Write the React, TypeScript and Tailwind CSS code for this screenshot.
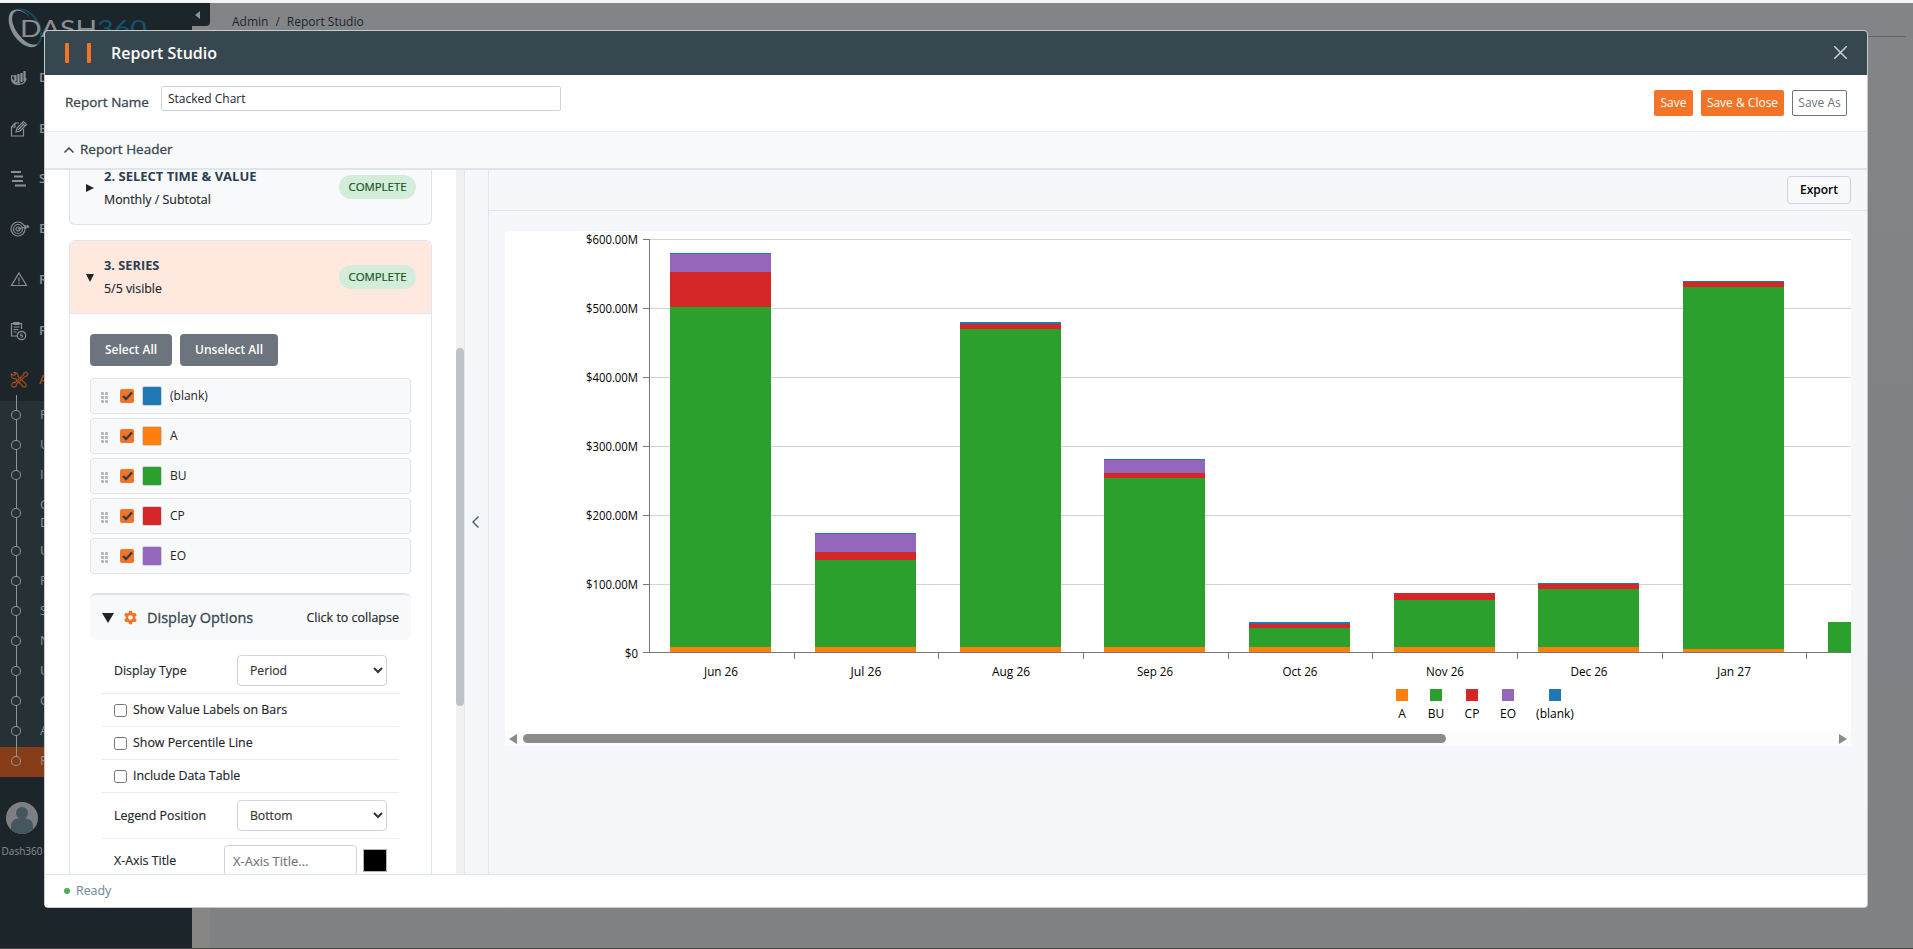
import { ReactNode } from "react";

const COLORS = {
  a: "#ff7f0e",
  bu: "#2ca02c",
  cp: "#d62728",
  eo: "#9467bd",
  blank: "#1f77b4",
};

const seriesList = [
  { name: "(blank)", swatch: "bg-[#1f77b4]" },
  { name: "A", swatch: "bg-[#ff7f0e]" },
  { name: "BU", swatch: "bg-[#2ca02c]" },
  { name: "CP", swatch: "bg-[#d62728]" },
  { name: "EO", swatch: "bg-[#9467bd]" },
];

const yTicks = ["$600.00M", "$500.00M", "$400.00M", "$300.00M", "$200.00M", "$100.00M", "$0"];

// every segment is [color, top], it runs down to the next one or to the axis
type Bar = { label: string; x: number; labelWidth: number; segments: [string, number][] };

const bars: Bar[] = [
  { label: "Jun 26", x: 165, labelWidth: 34, segments: [[COLORS.blank, 22], [COLORS.eo, 23], [COLORS.cp, 41], [COLORS.bu, 76], [COLORS.a, 416]] },
  { label: "Jul 26", x: 310, labelWidth: 31, segments: [[COLORS.blank, 302], [COLORS.eo, 303], [COLORS.cp, 321], [COLORS.bu, 329], [COLORS.a, 416]] },
  { label: "Aug 26", x: 455, labelWidth: 38, segments: [[COLORS.blank, 91], [COLORS.cp, 92.5], [COLORS.bu, 98], [COLORS.a, 416]] },
  { label: "Sep 26", x: 599, labelWidth: 36, segments: [[COLORS.blank, 228], [COLORS.eo, 229], [COLORS.cp, 242], [COLORS.bu, 247], [COLORS.a, 416]] },
  { label: "Oct 26", x: 744, labelWidth: 35, segments: [[COLORS.blank, 391], [COLORS.cp, 392.5], [COLORS.bu, 397], [COLORS.a, 416]] },
  { label: "Nov 26", x: 889, labelWidth: 38, segments: [[COLORS.cp, 362], [COLORS.bu, 369], [COLORS.a, 416]] },
  { label: "Dec 26", x: 1033, labelWidth: 37, segments: [[COLORS.blank, 352], [COLORS.cp, 353], [COLORS.bu, 358], [COLORS.a, 416]] },
  { label: "Jan 27", x: 1178, labelWidth: 34, segments: [[COLORS.blank, 50], [COLORS.cp, 51], [COLORS.bu, 56], [COLORS.a, 418]] },
  { label: "", x: 1323, labelWidth: 0, segments: [[COLORS.bu, 391]] },
];

const legend = [
  { name: "A", x: 897, color: COLORS.a },
  { name: "BU", x: 931, color: COLORS.bu },
  { name: "CP", x: 967, color: COLORS.cp },
  { name: "EO", x: 1003, color: COLORS.eo },
  { name: "(blank)", x: 1050, color: COLORS.blank },
];

const Chart = () => (
  <svg width="1346" height="500" className="font-['Open_Sans',sans-serif] text-[12px]" shapeRendering="crispEdges">
    {yTicks.map((tick, i) => {
      const y = i === 6 ? 421 : 8 + i * 69;
      return (
        <g key={tick}>
          {i < 6 && <rect x="145" y={y} width="1201" height="1" fill="#d3d3d3" />}
          <rect x="138" y={y} width="6" height="1" fill="#767676" />
          <text
            x="133"
            y={8 + i * 69 + 5}
            textAnchor="end"
            fill="#000"
            textLength={i === 6 ? 13 : 52}
            lengthAdjust="spacingAndGlyphs"
          >
            {tick}
          </text>
        </g>
      );
    })}
    {bars.map((bar) => (
      <g key={bar.x}>
        {bar.segments.map(([color, top], i) => {
          const bottom = bar.segments[i + 1]?.[1] ?? 421;
          return <rect key={i} x={bar.x} y={top} width="101" height={bottom - top} fill={color} />;
        })}
        {bar.label && (
          <text x={bar.x + 51} y="445" textAnchor="middle" fill="#000" textLength={bar.labelWidth} lengthAdjust="spacingAndGlyphs">
            {bar.label}
          </text>
        )}
      </g>
    ))}
    <rect x="144" y="8" width="1" height="414" fill="#767676" />
    <rect x="144" y="421" width="1202" height="1" fill="#767676" />
    {[289, 433, 578, 723, 867, 1012, 1157, 1301].map((x) => (
      <rect key={x} x={x} y="422" width="1" height="6" fill="#767676" />
    ))}
    {legend.map((item) => (
      <g key={item.name}>
        <rect x={item.x - 6} y="458" width="12" height="12" fill={item.color} />
        <text x={item.x} y="487" textAnchor="middle" fill="#000">
          {item.name}
        </text>
      </g>
    ))}
  </svg>
);

const Logo = () => (
  <svg width="192" height="47" viewBox="0 0 192 47" fill="none">
    <ellipse cx="26" cy="25" rx="13" ry="20" transform="rotate(-30 26 25)" stroke="#0f4c66" strokeWidth="1.8" />
    <path
      fill="#8d9092"
      fillRule="evenodd"
      d="M14 7C5 10 8 28 19 38c7 7 16 8 19 3-6 2-12-1-17-7C12 25 9 11 16 8c5-1 11 3 15 7C26 9 19 5 14 7z"
    />
    <text x="20" y="34" fill="#8d9092" fontSize="23" fontFamily="Lato, sans-serif" textLength="77" lengthAdjust="spacingAndGlyphs">
      DASH
    </text>
    <text x="97" y="34" fill="#125372" fontSize="23" fontFamily="Lato, sans-serif" textLength="50" lengthAdjust="spacingAndGlyphs">
      360
    </text>
  </svg>
);

const NavIcon = ({ children }: { children: ReactNode }) => (
  <svg width="20" height="20" viewBox="0 0 20 20" fill="none" stroke="currentColor" strokeWidth="1.2" className="shrink-0">
    {children}
  </svg>
);

const navItems = [
  {
    label: "Dashboard",
    height: "h-[50px]",
    icon: (
      <>
        <path d="M2 7c-2 6 2 11 9 9 4-1 5-4 5-6M2 8h3v5M2 11c1 3 4 4 8 4" />
        <path d="M5.500 13V7M8.500 15V6M11.500 14V5M14.500 13V3" strokeWidth="2.2" />
      </>
    ),
  },
  {
    label: "Budget",
    height: "h-[52px]",
    icon: (
      <>
        <path d="M9 4H5L1.500 8v9h12v-7M5 4v4H1.500" />
        <path d="M6 13l1-4 6.500-6.500 3 3L10 12l-4 1zM12 4l3 3M8 11l5-5" />
      </>
    ),
  },
  {
    label: "Schedule",
    height: "h-[47px]",
    icon: <path d="M1 3h10M4 7.500h9M2 12h11M5 16.500h11" strokeWidth="1.8" />,
  },
  {
    label: "Estimate",
    height: "h-[54px]",
    icon: (
      <>
        <circle cx="8" cy="10" r="7" />
        <circle cx="8" cy="10" r="4.5" />
        <circle cx="8" cy="10" r="2" />
        <path d="M8 10l11-3M15 6l1 4M17 6l1 3M14 8h5" />
      </>
    ),
  },
  {
    label: "Risk",
    height: "h-[48px]",
    icon: (
      <>
        <path d="M9 3l7.500 12.500h-15z" />
        <path d="M9 7.500v4M9 12.500v1.500" />
      </>
    ),
  },
  {
    label: "Financials",
    height: "h-[54px]",
    icon: (
      <>
        <path d="M7 15H1.500V2.500h10V8M4 1.500h5v2H4zM3.500 6h6M3.500 8.500h5M3.500 11h3" />
        <circle cx="11.500" cy="14.500" r="4.200" />
        <path d="M12.500 13h-2v1.500h2V16h-2" strokeWidth="0.9" />
      </>
    ),
  },
];

const subItems = ["Filters", "Users", "Import", "Custom Data", "Units", "Forms", "Status", "Names", "Uploads", "Codes", "Audit", "Report Studio"];

const Sidebar = () => (
  <div className="flex w-[192px] shrink-0 flex-col bg-[#1c262a] text-[13px] text-[#8c9193]">
    <div className="h-[47px]">
      <Logo />
    </div>
    <div className="mt-[3px] flex flex-col">
      {navItems.map((item) => (
        <div key={item.label} className={`flex items-center gap-[9px] pl-[10px] ${item.height}`}>
          <NavIcon>{item.icon}</NavIcon>
          <span className="font-semibold">{item.label}</span>
        </div>
      ))}
      <div className="flex h-[43px] items-center gap-[9px] pl-[10px] text-[#a34a1e]">
        <NavIcon>
          <path d="M3.500 5.500L1.500 4c-1 3 1.500 5 4 4.500l7.500 8c2 1.500 4-.5 3-2.500L8 6.500C8.500 4 6.500 2 4 2.500l1.500 2z" />
          <path d="M16 2l-2 1-.5 2-8.500 7.500c-3-.5-4.500 2.500-2 4.500 2.500.5 3.500-1 3.500-3L15 6.500l1.500-.5L18 4z" />
        </NavIcon>
        <span className="font-semibold">Admin</span>
      </div>
    </div>
    <div className="relative flex flex-col bg-[#263136]">
      {subItems.map((label, i) => {
        const active = i === subItems.length - 1;
        return (
          <div
            key={label}
            className={`flex items-center gap-5 pl-3 ${label === "Custom Data" ? "h-[46px]" : "h-[30px]"} ${
              active ? "bg-[#863d17]" : ""
            }`}
          >
            <span className={`z-10 -mt-0.5 size-2 shrink-0 rounded-full ring-1 ring-[#8f9496] ${active ? "bg-[#863d17]" : "bg-[#263136]"}`} />
            <span className={label === "Custom Data" ? "-mt-0.5 w-14 leading-[18px]" : "-mt-0.5"}>{label}</span>
          </div>
        );
      })}
      <span className="absolute -top-[6px] left-4 h-[364px] w-px bg-[#8f9496]" />
    </div>
    <div className="mt-[25px] flex w-11 flex-col items-center">
      <svg width="32" height="32" viewBox="0 0 32 32">
        <defs>
          <clipPath id="avatar">
            <circle cx="16" cy="16" r="16" />
          </clipPath>
        </defs>
        <g clipPath="url(#avatar)">
          <rect width="32" height="32" fill="#7d7f82" />
          <circle cx="16" cy="11" r="6" fill="#46565f" />
          <path d="M5 32v-8c0-6 5-8 11-8s11 2 11 8v8z" fill="#46565f" />
        </g>
      </svg>
      <span className="mt-[10px] text-[10px] leading-[14px]">Dash360</span>
    </div>
  </div>
);

const Badge = () => (
  <span className="ml-auto flex h-6 w-[77px] items-center justify-center rounded-full bg-[#d4edda] text-[11.4px] font-medium text-[#155724] [-webkit-text-stroke:0.2px]">
    COMPLETE
  </span>
);

const OptionRow = ({ children, className = "" }: { children: ReactNode; className?: string }) => (
  <div className={`flex items-center border-b border-[#ececee] px-3 ${className}`}>{children}</div>
);

const CheckRow = ({ label }: { label: string }) => (
  <OptionRow className="h-[33px]">
    <span className="mt-px size-[13px] rounded-[2.5px] border border-[#767676] bg-white" />
    <span className="ml-1.5">{label}</span>
  </OptionRow>
);

const SelectBox = ({ value }: { value: string }) => (
  <select className="ml-auto h-[31px] w-[150px] rounded border border-[#ced4da] bg-white pr-0 pl-2 text-[12.2px] font-normal text-[#333]">
    <option>{value}</option>
  </select>
);

const DisplayOptions = () => (
  <div className="mt-[19px]">
    <div className="flex h-[47px] items-center rounded-md border-t-2 border-[#dee6ea] bg-[#f8f9fb] px-3">
      <svg width="12" height="10" viewBox="0 0 12 10">
        <path d="M0 0h12L6 10z" fill="#212529" />
      </svg>
      <svg width="15" height="15" viewBox="0 0 512 512" className="ml-[9px]">
        <path
          fill="#f37427"
          fillRule="evenodd"
          d="M206 28h100l14 62 38 22 62-19 50 87-48 43v66l48 43-50 87-62-19-38 22-14 62H206l-14-62-38-22-62 19-50-87 48-43v-66l-48-43 50-87 62 19 38-22zM256 176a80 80 0 1 0 0 160 80 80 0 0 0 0-160z"
        />
      </svg>
      <span className="ml-[9px] text-[14.5px] font-medium text-[#37474f] [-webkit-text-stroke:0.3px]">Display Options</span>
      <span className="mt-px ml-auto text-[12.5px] font-medium text-[#212529] [-webkit-text-stroke:0.15px]">Click to collapse</span>
    </div>
    <div className="mt-[8px] px-3 text-[12.4px] font-medium text-[#212529] [-webkit-text-stroke:0.15px]">
      <OptionRow className="h-[46px]">
        <span className="mt-px">Display Type</span>
        <SelectBox value="Period" />
      </OptionRow>
      <CheckRow label="Show Value Labels on Bars" />
      <CheckRow label="Show Percentile Line" />
      <CheckRow label="Include Data Table" />
      <OptionRow className="h-[46px]">
        <span className="mt-px">Legend Position</span>
        <SelectBox value="Bottom" />
      </OptionRow>
      <OptionRow className="h-11">
        <span className="mt-px">X-Axis Title</span>
        <input
          placeholder="X-Axis Title..."
          className="ml-auto h-[31px] w-[133px] rounded border border-[#ced4da] px-2 text-[13px] font-normal placeholder:text-[#757575]"
        />
        <span className="ml-1.5 h-[23px] w-6 border border-[#b5b5b5] bg-black" />
      </OptionRow>
    </div>
  </div>
);

const ConfigPanel = () => (
  <div className="flex w-[420px] shrink-0 border-r border-[#dee6ea] bg-white">
    <div className="h-[704px] flex-1 overflow-hidden pl-6">
      <div className="flex h-[55px] w-[363px] items-center rounded-b-md border border-t-0 border-[#dee6ea] bg-[#f8f9fb] px-[15px]">
        <svg width="8" height="8" viewBox="0 0 8 8" className="-mt-[19px] ml-px">
          <path d="M0 0l8 4-8 4z" fill="#212529" />
        </svg>
        <div className="-mt-[19px] ml-[10px]">
          <div className="text-[13px] leading-6 font-bold text-[#2c3e50]">2. SELECT TIME &amp; VALUE</div>
          <div className="text-[12.4px] leading-6 font-medium text-[#212529] [-webkit-text-stroke:0.15px]">Monthly / Subtotal</div>
        </div>
        <div className="-mt-5 ml-auto">
          <Badge />
        </div>
      </div>
      <div className="mt-[15px] w-[363px] rounded-t-md border border-[#dee6ea]">
        <div className="flex h-[73px] items-center rounded-t-md border-b border-[#dee6ea] bg-[#ffe8de] px-[15px]">
          <svg width="8" height="8" viewBox="0 0 8 8" className="mt-px ml-px">
            <path d="M0 0h8L4 8z" fill="#212529" />
          </svg>
          <div className="ml-[10px]">
            <div className="-mt-px mb-px text-[12.8px] leading-6 font-bold text-[#2c3e50]">3. SERIES</div>
            <div className="text-[12.4px] leading-[22px] font-medium text-[#212529] [-webkit-text-stroke:0.15px]">5/5 visible</div>
          </div>
          <Badge />
        </div>
        <div className="px-5 pt-5">
          <div className="flex gap-2 text-[12px] font-semibold text-white">
            <button className="h-8 w-[82px] rounded bg-[#6c757d]">Select All</button>
            <button className="h-8 w-[98px] rounded bg-[#6c757d]">Unselect All</button>
          </div>
          <div className="mt-3 flex flex-col gap-1">
            {seriesList.map((series) => (
              <div key={series.name} className="flex h-9 items-center rounded border border-[#dee6ea] bg-[#f8f9fb] pl-[10px]">
                <div className="mt-0.5 grid grid-cols-2 gap-px">
                  {[0, 1, 2, 3, 4, 5].map((dot) => (
                    <span key={dot} className="size-[3px] rounded-[1px] bg-[#adb5bd]" />
                  ))}
                </div>
                <span className="ml-3 flex size-3.5 items-center justify-center rounded-[2px] bg-[#f37427]">
                  <svg width="11" height="10" viewBox="0 0 11 10" fill="none" stroke="#333d42" strokeWidth="2.4">
                    <path d="M1 5l3 3 6-6.500" />
                  </svg>
                </span>
                <span className={`ml-2 size-5 rounded-[2px] border border-[#ced4da] ${series.swatch}`} />
                <span className="ml-2 text-[12px] text-[#212529]">{series.name}</span>
              </div>
            ))}
          </div>
          <DisplayOptions />
        </div>
      </div>
    </div>
    <div className="w-2 bg-[#f1f1f1] pt-[178px]">
      <div className="h-[358px] rounded-full bg-[#bdc3c7]" />
    </div>
  </div>
);

const ChartPanel = () => (
  <div className="flex flex-1 flex-col">
    <div className="flex h-[41px] items-center justify-end border-b border-[#dee6ea] px-4">
      <button className="h-7 w-16 rounded border border-[#ced4da] bg-[#f8f9fb] text-[12px] font-semibold text-black">Export</button>
    </div>
    <div className="mx-4 mt-5 overflow-hidden rounded-t bg-white">
      <Chart />
      <div className="flex h-[15px] items-center bg-[#fcfcfc] px-1">
        <svg width="8" height="10" viewBox="0 0 8 10">
          <path d="M8 0v10L0 5z" fill="#8b8b8b" />
        </svg>
        <div className="ml-1.5 h-[9px] w-[923px] rounded-full bg-[#8b8b8b]" />
        <svg width="8" height="10" viewBox="0 0 8 10" className="ml-auto">
          <path d="M0 0v10l8-5z" fill="#8b8b8b" />
        </svg>
      </div>
    </div>
  </div>
);

const ReportStudioModal = () => (
  <div className="absolute top-[30px] left-11 flex h-[878px] w-[1824px] flex-col overflow-hidden rounded-[4px] border border-[#c9cacb] bg-white">
    <div className="flex h-11 shrink-0 items-center bg-[#37474f] px-5">
      <div className="flex gap-[18px]">
        <span className="h-5 w-1 rounded-[1px] bg-[#f37427]" />
        <span className="h-5 w-1 rounded-[1px] bg-[#f37427]" />
      </div>
      <span className="ml-5 text-[16px] font-semibold text-white">Report Studio</span>
      <svg width="13" height="13" viewBox="0 0 13 13" className="-mt-px ml-auto" stroke="#ccd0d2" strokeWidth="1.5">
        <path d="M0 0l13 13M13 0L0 13" />
      </svg>
    </div>
    <div className="flex h-[57px] shrink-0 items-center border-b border-[#e9ecef] px-5">
      <span className="-mt-0.5 w-24 text-[13.5px] font-medium text-[#37474f] [-webkit-text-stroke:0.3px]">Report Name</span>
      <input
        defaultValue="Stacked Chart"
        className="-mt-[9px] h-[25px] w-[400px] rounded-[2px] border border-[#ced4da] px-1.5 text-[12px] text-[#212529]"
      />
      <div className="ml-auto flex gap-2 text-[12px]">
        <button className="h-[26px] w-[39px] rounded-[2px] bg-[#f37427] text-white">Save</button>
        <button className="h-[26px] w-[83px] rounded-[2px] bg-[#f37427] text-white">Save &amp; Close</button>
        <button className="h-[26px] w-[55px] rounded-[2px] border border-[#6c757d] text-[#6c757d]">Save As</button>
      </div>
    </div>
    <div className="flex h-[38px] shrink-0 items-center border-b-2 border-[#dee6ea] bg-[#f8f9fb] px-[19px]">
      <svg width="10" height="6" viewBox="0 0 10 6" fill="none" stroke="#37474f" strokeWidth="1.5">
        <path d="M.5 5.500L5 1l4.500 4.500" />
      </svg>
      <span className="-mt-0.5 ml-1.5 text-[13.5px] font-medium text-[#37474f] [-webkit-text-stroke:0.3px]">Report Header</span>
    </div>
    <div className="flex h-[704px] shrink-0 bg-[#f5f7fb]">
      <ConfigPanel />
      <div className="flex w-6 shrink-0 items-center justify-center border-r border-[#dee6ea] pr-0.5">
        <svg width="7" height="12" viewBox="0 0 7 12" fill="none" stroke="#4a6572" strokeWidth="1.5">
          <path d="M6.500.5L1 6l5.500 5.500" />
        </svg>
      </div>
      <ChartPanel />
    </div>
    <div className="flex flex-1 items-center border-t border-[#dee6ea] bg-white px-[19px]">
      <span className="size-1.5 rounded-full bg-[#4caf50]" />
      <span className="ml-1.5 text-[12.4px] text-[#78909c] [-webkit-text-stroke:0.15px]">Ready</span>
    </div>
  </div>
);

const App = () => {
  return (
    <div className="relative flex h-[949px] w-[1913px] overflow-hidden border-t-3 border-b border-t-[#f3f4f4] border-b-[#44483f] bg-[#838487] font-['Open_Sans',sans-serif]">
      <Sidebar />
      <div className="flex w-[18px] shrink-0 flex-col bg-[#878685]">
        <div className="flex h-[23px] items-center rounded-br bg-[#1c262a]">
          <svg width="5" height="8" viewBox="0 0 5 8" className="ml-[3px]">
            <path d="M5 0v8L0 4z" fill="#8f9496" />
          </svg>
        </div>
      </div>
      <div className="flex-1 bg-linear-to-b from-[#838487] via-[#7f8386] to-[#808185] pr-[7px] pl-[22px]">
        <div className="flex h-[34px] items-center gap-[7px] border-b border-[#616367] pt-1 text-[12px] text-[#1c262a]">
          <span>Admin</span>
          <span>/</span>
          <span>Report Studio</span>
        </div>
      </div>
      <div className="absolute inset-0 -top-[3px]">
        <ReportStudioModal />
      </div>
    </div>
  );
};

export default App;
